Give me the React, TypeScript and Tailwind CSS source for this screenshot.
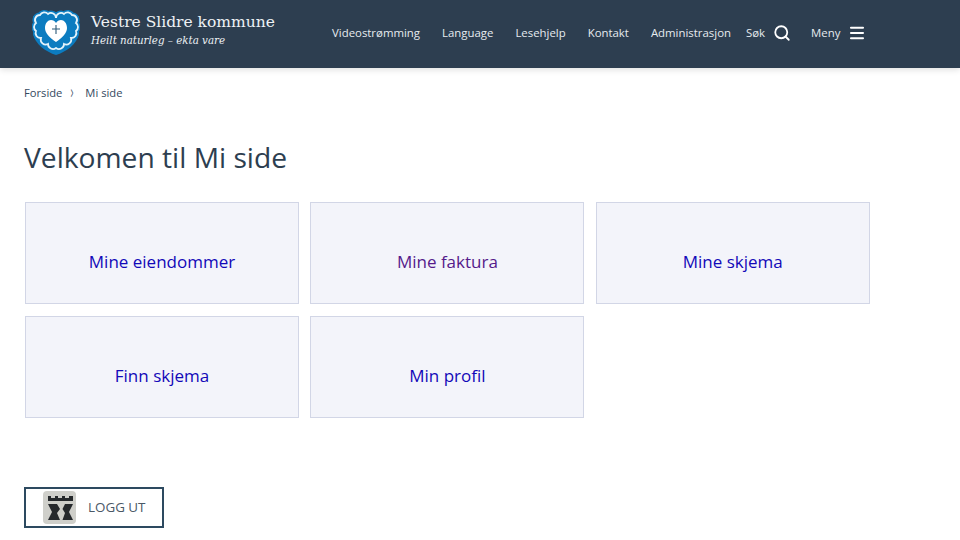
import { Menu, Search } from "lucide-react";

const navLinks = ["Videostrømming", "Language", "Lesehjelp", "Kontakt", "Administrasjon"];

const cards = [
  { label: "Mine eiendommer", color: "text-[#1208b8]" },
  { label: "Mine faktura", color: "text-[#551a8b]" },
  { label: "Mine skjema", color: "text-[#1208b8]" },
  { label: "Finn skjema", color: "text-[#1208b8]" },
  { label: "Min profil", color: "text-[#1208b8]" },
];

const scallop =
  "M24 10 A5 5 0 0 1 32 6 A5 5 0 0 1 40 7 A5 5 0 0 1 44 15 A5 5 0 0 1 44 23 A5 5 0 0 1 39 30 A5 5 0 0 1 32 36 A5 5 0 0 1 24 40 A5 5 0 0 1 16 36 A5 5 0 0 1 9 30 A5 5 0 0 1 4 23 A5 5 0 0 1 4 15 A5 5 0 0 1 8 7 A5 5 0 0 1 16 6 A5 5 0 0 1 24 10 Z";

function Logo() {
  return (
    <svg width="48" height="48" viewBox="0 0 48 48" className="mb-[4px] shrink-0">
      <path d="M1 8 L1 26 C3 36 14 44 24 47 C34 44 45 36 47 26 L47 8 L24 4 Z" fill="#0c7cc0" />
      <path d={scallop} fill="#0c7cc0" stroke="#0c7cc0" strokeWidth="5" />
      <path d={scallop} fill="#0c7cc0" stroke="#e4f3fb" strokeWidth="1.8" />
      <path
        d="M24 34 C17 29 13 25 13 20 C13 15 16 12 19 12 C21 12 23 13 24 15 C25 13 27 12 29 12 C32 12 35 15 35 20 C35 25 31 29 24 34 Z"
        fill="#ffffff"
      />
      <path d="M24 17 V26 M20 21 H28" stroke="#2d5a78" strokeWidth="1.1" />
    </svg>
  );
}

function CastleIcon() {
  return (
    <div className="h-[33px] w-[33px] rounded-sm bg-[#cfcfca]">
      <svg width="33" height="33" viewBox="0 0 33 33">
        <path d="M5 5 H8 V7 H12 V5 H15 V7 H19 V5 H22 V7 H26 V5 H30 V10 H5 Z" fill="#26292c" />
        <path d="M5 13 H14 L17 18 L14 22 L17 29 H5 L9 21 Z" fill="#26292c" />
        <path d="M30 13 H22 L19.5 18 L22 22 L19.5 29 H30 L26 21 Z" fill="#26292c" />
      </svg>
    </div>
  );
}

export default function App() {
  return (
    <div className="h-[540px] w-[960px] overflow-hidden bg-white font-['Open_Sans',sans-serif]">
      <header className="flex h-[68px] items-center bg-[#2d3e50] pl-[32px] shadow-[0_2px_6px_rgba(0,0,0,0.12)]">
        <Logo />
        <div className="mb-[8px] ml-[11px] w-[241px] text-[#eef2f5]">
          <div className="font-['DejaVu_Serif',serif] text-[15.5px] leading-[20px]">
            Vestre Slidre kommune
          </div>
          <div className="font-['DejaVu_Serif',serif] text-[10.3px] leading-[16px] italic">
            Heilt naturleg – ekta vare
          </div>
        </div>
        <nav className="mb-[2px] flex items-center text-[11.4px] text-[#e6ebef]">
          <div className="flex gap-[22px]">
            {navLinks.map((link) => (
              <span key={link}>{link}</span>
            ))}
          </div>
          <span className="ml-[15px]">Søk</span>
          <Search size={18} strokeWidth={2.4} className="ml-[8px] text-white" />
          <span className="ml-[20px]">Meny</span>
          <Menu size={18} strokeWidth={2.8} className="ml-[8px] text-white" />
        </nav>
      </header>

      <main className="px-6">
        <div className="flex h-[50px] items-center text-[11.2px] text-[#34495e]">
          <span>Forside</span>
          <span className="mx-[7.5px] text-[8px] font-bold">〉</span>
          <span>Mi side</span>
        </div>

        <h1 className="mt-[19px] text-[28.2px] leading-[40px] text-[#2d3e50]">Velkomen til Mi side</h1>

        <div className="mt-[25px] ml-px grid w-[845px] grid-cols-[274px_274px_274px] gap-x-[11.4px] gap-y-[12px]">
          {cards.map((card) => (
            <a
              key={card.label}
              className={`flex h-[102px] items-center justify-center border border-[#d2d6e6] bg-[#f3f4fa] pt-[18px] text-[17px] font-medium ${card.color}`}
            >
              {card.label}
            </a>
          ))}
        </div>

        <button className="mt-[69px] flex h-[41px] w-[140px] items-center border-2 border-[#2d4a60] pl-[17px] text-[13.4px] text-[#4a5866]">
          <CastleIcon />
          <span className="ml-[12px]">LOGG UT</span>
        </button>
      </main>
    </div>
  );
}
